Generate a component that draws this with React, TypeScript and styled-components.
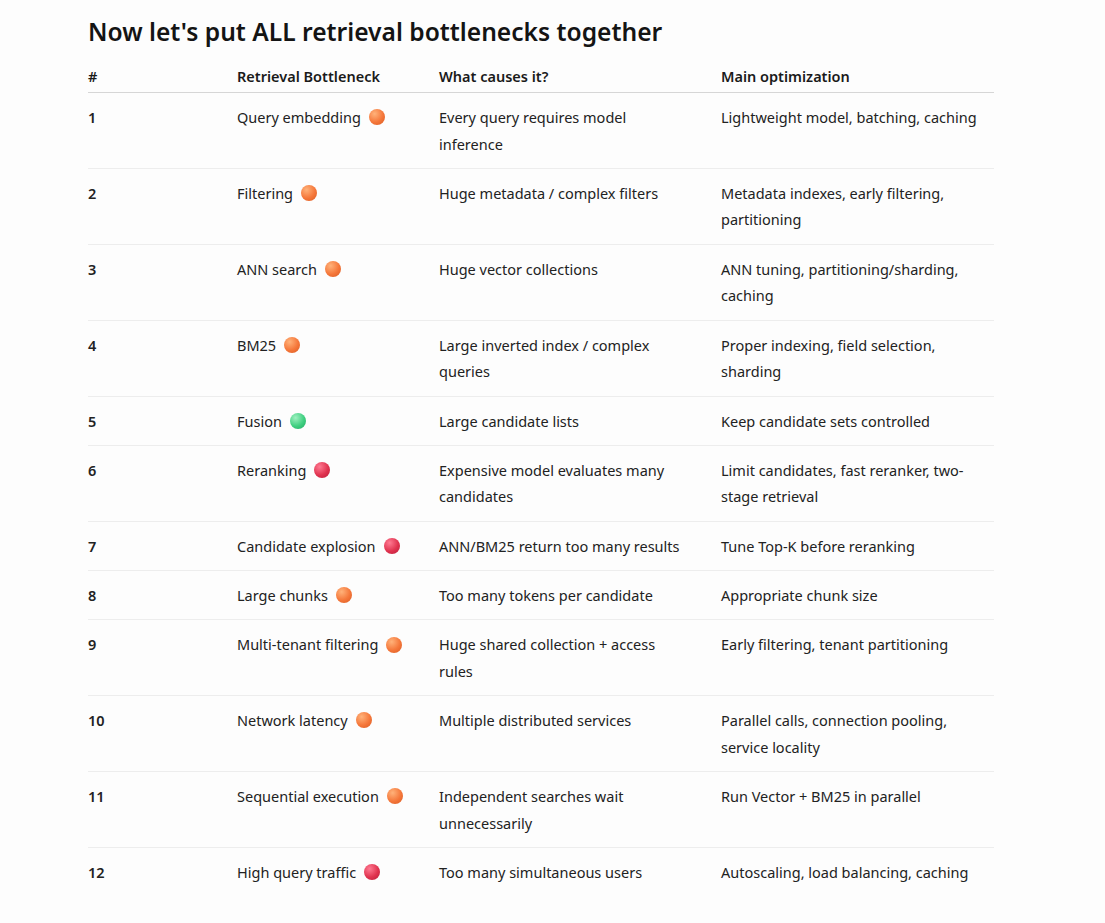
import React from "react";
import styled, { createGlobalStyle } from "styled-components";

const Global = createGlobalStyle`
  html, body { margin: 0; padding: 0; background: #fdfdfd; }
  body { font-family: "Noto Sans", "Open Sans", sans-serif; color: #1f1f1f; }
`;

const Page = styled.div`
  padding: 14px 0 40px 88px;
  width: 906px;
`;

const Title = styled.h2`
  margin: 0 0 9px 0;
  font-size: 24.6px;
  line-height: 36px;
  font-weight: 600;
  color: #141414;
`;

const Table = styled.table`
  width: 906px;
  border-collapse: collapse;
  table-layout: fixed;
  font-size: 14.5px;
`;

const Th = styled.th<{ w: number }>`
  width: ${(p) => p.w}px;
  text-align: left;
  font-weight: 600;
  padding: 4px 0 3px 0;
  line-height: 26px;
  border-bottom: 1px solid #d6d6d6;
  color: #1a1a1a;
`;

const Tr = styled.tr`
  border-bottom: 1px solid #ededed;
  &:last-child { border-bottom: none; }
`;

const Td = styled.td<{ strong?: boolean; padRight?: number }>`
  vertical-align: top;
  padding: 11px ${(p) => p.padRight ?? 0}px 10.7px 0;
  line-height: 26.6px;
  font-weight: ${(p) => (p.strong ? 600 : 400)};
  color: #222;
`;

const Name = styled.span`
  display: inline-flex;
  align-items: center;
  gap: 8px;
`;

const palettes = {
  orange: ["#ffb27a", "#f5773a", "#d85a22"],
  green: ["#9ff0c0", "#3fcf80", "#22a862"],
  red: ["#ff7a92", "#e0334f", "#b81c3a"],
};

type Tone = keyof typeof palettes;

const Dot = styled.span<{ tone: Tone }>`
  display: inline-block;
  width: 16px;
  height: 16px;
  border-radius: 50%;
  background: ${(p) => {
    const [a, b, c] = palettes[p.tone];
    return `radial-gradient(circle at 35% 30%, ${a} 0%, ${b} 55%, ${c} 100%)`;
  }};
`;

const rows: [string, string, Tone, string, string][] = [
  ["1", "Query embedding", "orange", "Every query requires model inference", "Lightweight model, batching, caching"],
  ["2", "Filtering", "orange", "Huge metadata / complex filters", "Metadata indexes, early filtering, partitioning"],
  ["3", "ANN search", "orange", "Huge vector collections", "ANN tuning, partitioning/sharding, caching"],
  ["4", "BM25", "orange", "Large inverted index / complex queries", "Proper indexing, field selection, sharding"],
  ["5", "Fusion", "green", "Large candidate lists", "Keep candidate sets controlled"],
  ["6", "Reranking", "red", "Expensive model evaluates many candidates", "Limit candidates, fast reranker, two-stage retrieval"],
  ["7", "Candidate explosion", "red", "ANN/BM25 return too many results", "Tune Top-K before reranking"],
  ["8", "Large chunks", "orange", "Too many tokens per candidate", "Appropriate chunk size"],
  ["9", "Multi-tenant filtering", "orange", "Huge shared collection + access rules", "Early filtering, tenant partitioning"],
  ["10", "Network latency", "orange", "Multiple distributed services", "Parallel calls, connection pooling, service locality"],
  ["11", "Sequential execution", "orange", "Independent searches wait unnecessarily", "Run Vector + BM25 in parallel"],
  ["12", "High query traffic", "red", "Too many simultaneous users", "Autoscaling, load balancing, caching"],
];

export default function App() {
  return (
    <>
      <Global />
      <Page>
        <Title>Now let's put ALL retrieval bottlenecks together</Title>
        <Table>
          <thead>
            <tr>
              <Th w={149}>#</Th>
              <Th w={202}>Retrieval Bottleneck</Th>
              <Th w={282}>What causes it?</Th>
              <Th w={273}>Main optimization</Th>
            </tr>
          </thead>
          <tbody>
            {rows.map(([n, name, tone, cause, fix]) => (
              <Tr key={n}>
                <Td strong>{n}</Td>
                <Td padRight={16}>
                  <Name>
                    {name}
                    <Dot tone={tone} />
                  </Name>
                </Td>
                <Td padRight={33}>{cause}</Td>
                <Td>{fix}</Td>
              </Tr>
            ))}
          </tbody>
        </Table>
      </Page>
    </>
  );
}
